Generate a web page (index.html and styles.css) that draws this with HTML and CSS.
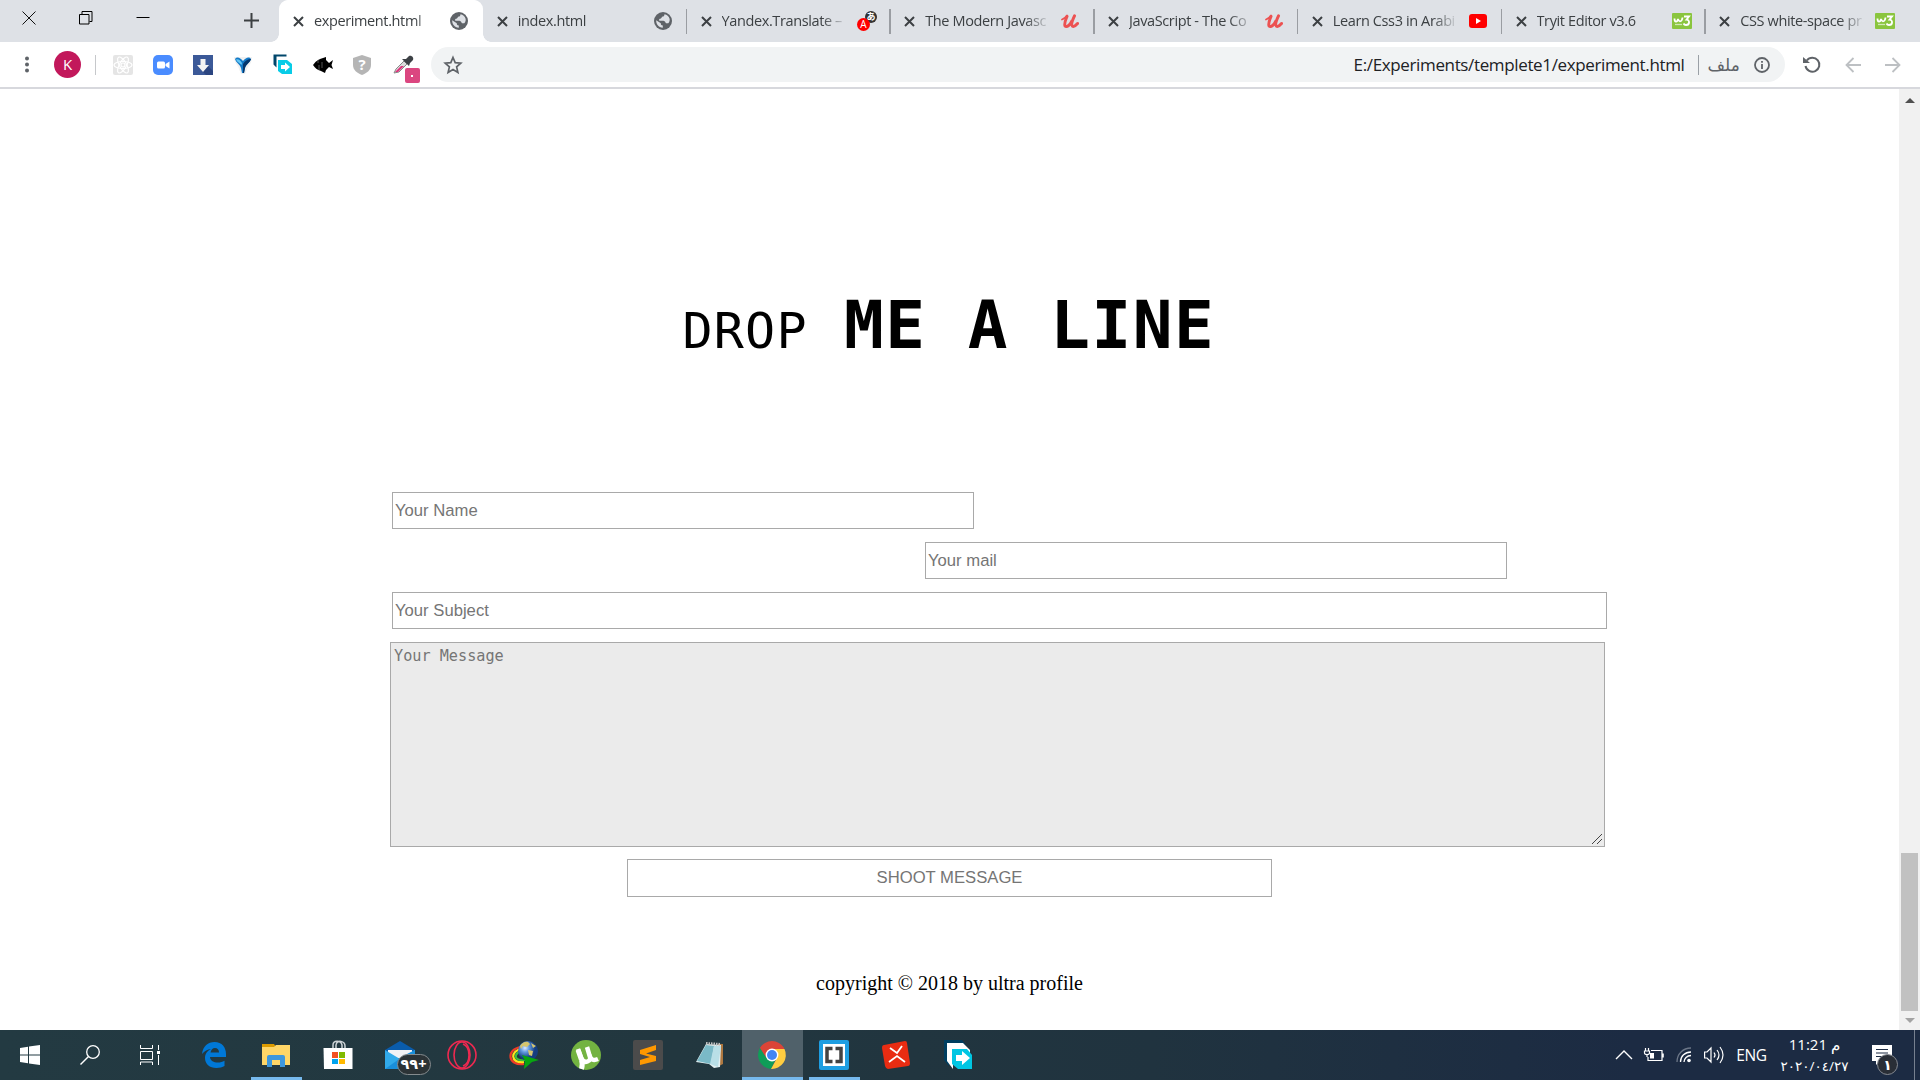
FILE: index.html
```html
<!DOCTYPE html>
<html lang="en">
<head>
<meta charset="utf-8">
<title>experiment.html</title>
<link rel="stylesheet" href="styles.css">
</head>
<body>
<svg class="defs" width="0" height="0">
  <defs>
    <symbol id="x" viewBox="0 0 11 11"><path d="M1 1l9 9M10 1l-9 9" stroke="#3c4043" stroke-width="2" fill="none"/></symbol>
    <symbol id="globe" viewBox="0 0 18 18"><circle cx="9" cy="9" r="9" fill="#5f6368"/><path d="M10.500 2.200c-.4 1.800-.6 2.400-2.500 2.600-.4 1.800-1.600 2-2.800 2.200v1.800h4.300c1.800.2 1.600 1.800 2.500 2.400h2.300c1.300-1.500 1.600-3 1.300-4.500C14.800 4.300 13 2.600 10.500 2.200zM2.200 8.200c-.2 3.800 2.300 7.200 6.600 7.500v-2.200c-1.500-.2-2-.8-2-2.300z" fill="#dee1e6"/></symbol>
    <symbol id="udemy" viewBox="0 0 18 15"><path d="M1 5.500Q4 4.500 6 1.500" fill="none" stroke="#ec5252" stroke-width="1.800" stroke-linecap="round"/><path d="M6 2.500C4.500 6 3 9.500 4 11.800 5.500 14 9 11 10.800 7M13.500 1.800C11.500 6 9.800 10.500 11.300 12c1.300 1 3.500-.5 5.200-2.500" fill="none" stroke="#ec5252" stroke-width="3" stroke-linecap="round" stroke-linejoin="round"/></symbol>
    <symbol id="w3" viewBox="0 0 20 16"><rect width="20" height="16" rx="1" fill="#8ac53e"/><path d="M2.500 5.500c0 4 2.700 4 3.500.5 1 3.500 4 3 4.500-1.500M12 3.500h5l-2.500 3.200c3.500 0 3.500 5.300-.5 5.300-1.300 0-2-.5-2.500-1.500" fill="none" stroke="#fff" stroke-width="1.800"/><path d="M3 11.500h7" stroke="#d2e9b4" stroke-width="1.300"/></symbol>
    <symbol id="freemake" viewBox="0 0 28 30"><path d="M0 0h18l4 5H5v21L0 20z" fill="#003e60"/><path d="M3 3h16l7 7v5H9v14L3 21z" fill="#fff"/><path d="M8 9h15l5 6v14H14l-6-5z" fill="#00c6e3"/><path d="M12 15h6v-4l8 7-8 7v-4h-6z" fill="#fff"/></symbol>
  </defs>
</svg>

<header class="browser">
  <div class="tabstrip">
    <div class="window-controls">
      <svg width="14" height="14"><path d="M.5.5l13 13M13.500.5l-13 13" stroke="#111" fill="none"/></svg>
      <svg width="14" height="14"><path d="M.5 3.500h9.500v9.500H.5zM3 3V.5h10v10h-2.500" stroke="#000" fill="none"/></svg>
      <svg width="14" height="14"><path d="M.5 6.500h13" stroke="#000"/></svg>
      <svg class="new-tab" width="15" height="15"><path d="M7.500 0v15M0 7.500h15" stroke="#3c4043" stroke-width="2"/></svg>
    </div>
    <div class="tab active"><svg class="close"><use href="#x"/></svg><span class="title">experiment.html</span><span class="fav"><svg width="18" height="18"><use href="#globe"/></svg></span></div>
    <div class="tab"><svg class="close"><use href="#x"/></svg><span class="title">index.html</span><span class="fav"><svg width="18" height="18"><use href="#globe"/></svg></span></div>
    <div class="tab"><svg class="close"><use href="#x"/></svg><span class="title">Yandex.Translate –</span><span class="fav"><svg class="yandex" width="20" height="20"><circle cx="14" cy="6" r="6" fill="#333"/><text x="14" y="9" font-size="9" font-weight="700" fill="#fff" text-anchor="middle">あ</text><circle cx="6.500" cy="13.500" r="6.500" fill="#f00"/><text x="6.500" y="17" font-size="10" fill="#fff" text-anchor="middle">A</text></svg></span></div>
    <div class="tab"><svg class="close"><use href="#x"/></svg><span class="title">The Modern Javasc</span><span class="fav"><svg width="18" height="15"><use href="#udemy"/></svg></span></div>
    <div class="tab"><svg class="close"><use href="#x"/></svg><span class="title">JavaScript - The Co</span><span class="fav"><svg width="18" height="15"><use href="#udemy"/></svg></span></div>
    <div class="tab"><svg class="close"><use href="#x"/></svg><span class="title">Learn Css3 in Arabi</span><span class="fav"><svg width="18" height="14"><rect width="18" height="14" rx="3" fill="#f00"/><path d="M7 4l5 3-5 3z" fill="#fff"/></svg></span></div>
    <div class="tab"><svg class="close"><use href="#x"/></svg><span class="title">Tryit Editor v3.6</span><span class="fav"><svg width="20" height="16"><use href="#w3"/></svg></span></div>
    <div class="tab last"><svg class="close"><use href="#x"/></svg><span class="title">CSS white-space pr</span><span class="fav"><svg width="20" height="16"><use href="#w3"/></svg></span></div>
  </div>

  <div class="toolbar">
    <div class="menu"><svg width="4" height="17"><g fill="#5f6368"><circle cx="2" cy="2.500" r="2"/><circle cx="2" cy="8.500" r="2"/><circle cx="2" cy="14.500" r="2"/></g></svg></div>
    <div class="avatar">K</div>
    <div class="divider"></div>
    <div class="extensions">
      <span><svg width="20" height="20"><rect width="20" height="20" rx="2" fill="#e5e5e5"/><g fill="none" stroke="#fff" stroke-width="1.200"><ellipse cx="10" cy="10" rx="9" ry="3.500"/><ellipse cx="10" cy="10" rx="9" ry="3.500" transform="rotate(60 10 10)"/><ellipse cx="10" cy="10" rx="9" ry="3.500" transform="rotate(120 10 10)"/><circle cx="10" cy="10" r="2"/></g></svg></span>
      <span><svg width="20" height="20"><rect width="20" height="20" rx="5" fill="#4a8cff"/><rect x="4" y="6.500" width="8" height="7" rx="1.500" fill="#fff"/><path d="M12.500 9l4-2.500v7l-4-2.500z" fill="#fff"/></svg></span>
      <span><svg width="20" height="20"><rect width="20" height="20" fill="#3b5998"/><path d="M14 10l6 6v4h-7l-4-4z" fill="#2b4580"/><path d="M7.500 4h5v6H16l-6 7-6-7h3.500z" fill="#f3f3f3"/></svg></span>
      <span><svg width="20" height="20"><path d="M1 2h18c0 7-4 9-5 12l-2 5H8l-2-5C5 10 1 8 1 2z" fill="#f1f1f1"/><path d="M2 4c2-2.500 5-1.500 8 2 3-3.500 6-4.500 8-2-1 4-5 5-6 9l-1 5H9l-1-5C7 9 3 8 2 4z" fill="#137ac8"/><path d="M3 4.500c2-.8 4.500.5 6 3.500l-.5 2C7 8 4 7 3 4.500z" fill="#62c5f3"/><path d="M18 4c-1 4-5 5-6 9l-1 5h-1V9c2-3 5-5.500 8-5z" fill="#05366c"/></svg></span>
      <span><svg width="20" height="21"><path d="M.5.5h13v2h-10v11l-3-3z" fill="#00466b"/><path d="M5 6h9l5 4v10H9l-4-3z" fill="#08cce7"/><path d="M8 11h4V8.500l5 4.500-5 4.500V15H8z" fill="#fff"/></svg></span>
      <span><svg width="20" height="16"><path d="M0 8C3 4 5 3 7 2l6-2v3l3 3 4-3-1.500 5L20 12l-4-2-3 3-1 3-4-2C4 13 2 11 0 8z" fill="#000"/><path d="M5 3v3M6 8v5M9 5v6" stroke="#777" stroke-width=".7"/></svg></span>
      <span class="shield"><svg width="18" height="20"><path d="M9 0l9 3v7c0 5-4 8-9 10-5-2-9-5-9-10V3z" fill="#b5b5b5"/><text x="9" y="15" font-size="15" font-weight="700" fill="#fff" text-anchor="middle">?</text></svg></span>
      <span><svg class="dropper" width="28" height="28"><path d="M1 18l2-4 8-8 3 3-8 8z" fill="#dcdcdc" stroke="#888"/><path d="M2 17l2-2 4-4h3l-6 6z" fill="#df357d"/><path d="M9 4l7 7 1-3 3-3c1-2-1-5-4-4l-3 3z" fill="#3d4145"/><rect x="12" y="13" width="15" height="15" rx="2" fill="#db4680"/><rect x="18" y="20" width="2" height="2" fill="#fff"/></svg></span>
    </div>
    <div class="omnibox">
      <svg width="18" height="18"><path d="M9 1.500l2.200 5.200 5.600.5-4.200 3.700 1.300 5.500L9 13.500l-4.900 2.900 1.300-5.500L1.200 7.200l5.600-.5z" fill="none" stroke="#5f6368" stroke-width="1.700"/></svg>
      <span class="url">E:/Experiments/templete1/experiment.html</span>
      <span class="scheme" lang="ar">ملف</span>
      <svg width="16" height="16"><circle cx="8" cy="8" r="7" fill="none" stroke="#5f6368" stroke-width="1.800"/><path d="M8 7v5M8 4v1.800" stroke="#5f6368" stroke-width="1.800"/></svg>
    </div>
    <div class="nav">
      <svg width="18" height="17"><path d="M3.800 4.500A7 7 0 1 1 2.500 10" fill="none" stroke="#5f6368" stroke-width="2"/><path d="M0 1l7 6H0z" fill="#5f6368"/></svg>
      <svg width="16" height="16"><path d="M16 8H1.500M8.500 1L1.500 8l7 7" fill="none" stroke="#bdc0c3" stroke-width="1.800"/></svg>
      <svg width="16" height="16"><path d="M0 8h14.500M7.500 1l7 7-7 7" fill="none" stroke="#bdc0c3" stroke-width="1.800"/></svg>
    </div>
  </div>
</header>

<div class="viewport">
  <main class="page">
    <h1 class="heading">DROP <strong>ME A LINE</strong></h1>
    <form class="contact">
      <input class="field name" type="text" placeholder="Your Name">
      <input class="field mail" type="text" placeholder="Your mail">
      <input class="field subject" type="text" placeholder="Your Subject">
      <div class="message-box">
        <textarea class="message" placeholder="Your Message"></textarea>
        <svg class="grip" width="10" height="10"><path d="M0 10L10 0M5 10l5-5" stroke="#444" stroke-width="1"/></svg>
      </div>
      <button class="send" type="button">SHOOT MESSAGE</button>
    </form>
    <footer class="copyright">copyright © 2018 by ultra profile</footer>
  </main>
  <div class="scrollbar">
    <svg width="10" height="5"><path d="M5 0l5 5H0z" fill="#505050"/></svg>
    <div class="thumb"></div>
    <svg width="10" height="5"><path d="M0 0h10L5 5z" fill="#a3a3a3"/></svg>
  </div>
</div>

<div class="taskbar">
  <div class="system">
    <span><svg width="20" height="20"><path d="M0 3l8-1.200V9.500H0zM9 1.600L20 0v9.500H9zM0 10.500h8v7.700L0 17zM9 10.500h11V20L9 18.400z" fill="#fff"/></svg></span>
    <span><svg width="20" height="20"><circle cx="13" cy="7" r="6.300" fill="none" stroke="#fff" stroke-width="1.300"/><path d="M8.500 11.500L.5 19.500" stroke="#fff" stroke-width="1.500"/></svg></span>
    <span><svg width="20" height="20"><path d="M.5 0v3.500h12V0M.5 6.500h12v8H.5zM.5 20v-3h12v3M18.500 0v5M18.500 10v10" fill="none" stroke="#fff"/><rect x="17" y="6" width="3" height="3" fill="#fff"/></svg></span>
  </div>
  <div class="apps">
    <span><svg width="24" height="26"><path d="M0 12C1 4 6 0 12.500 0 20 0 24 5.500 24 12v3H8c.3 4 4 5.500 7.500 5.500 3 0 5-.6 7-1.800V24c-2 1.300-5 2-8 2C7.500 26 3 22 3 16c0-4 2.500-7.500 6-9-3.500.3-6.500 2-9 5zm8.500-1.500H17C17 7.500 15.500 6 13 6c-2.500 0-4 2-4.500 4.500z" fill="#0078d7"/></svg></span>
    <span class="open"><svg width="28" height="24"><path d="M0 1h12l2 3H0z" fill="#dc9b00"/><path d="M0 4h12l2-2h14v20H0z" fill="#ffd667"/><path d="M5 24V14q0-2 2-2h14q2 0 2 2v10h-5v-7h-8v7z" fill="#3e97dc"/></svg></span>
    <span><svg width="30" height="30"><path d="M10 8V5c0-5 8-5 9 0v3M13 8V5c1-6 9-4 9 1v2" fill="none" stroke="#cdd3d6" stroke-width="1.500"/><path d="M.5 8h29v21H1z" fill="#fff"/><path d="M9 12h6v6H9z" fill="#f25022"/><path d="M16 12h6v6h-6z" fill="#7fba00"/><path d="M9 19h6v5H9z" fill="#00a4ef"/><path d="M16 19h6v5h-6z" fill="#ffb900"/></svg></span>
    <span class="mail-app"><svg width="30" height="28"><path d="M0 9L15 0l15 9v7H0z" fill="#0a5cab"/><path d="M3 9h24v8H3z" fill="#f1f2f5"/><path d="M0 9l15 9 15-9v19H0z" fill="#31aaea"/><path d="M0 28l20-14 10-5v19z" fill="#198fdb"/></svg><b class="count">٩٩+</b></span>
    <span><svg width="30" height="30"><g fill="none" stroke="#ee2950" stroke-width="1.600"><circle cx="15" cy="15" r="14"/><ellipse cx="15" cy="15" rx="8" ry="13"/><path d="M16 4c8 3 8 19 0 22"/></g></svg></span>
    <span><svg width="30" height="28"><defs><radialGradient id="earth" cx="35%" cy="35%"><stop offset="0" stop-color="#dfeaff"/><stop offset=".4" stop-color="#669de3"/><stop offset="1" stop-color="#153d80"/></radialGradient></defs><g fill="none" stroke-width="2.200"><path d="M12 6C-3 8-2 25 15 23" stroke="#f03b26"/><path d="M13 8C1 9 1 23 15 21" stroke="#ffe31c"/><path d="M14 10C4 11 4 21 16 19" stroke="#3bbf3f"/></g><circle cx="19" cy="10" r="10" fill="url(#earth)"/><path d="M11 5c2-3 5-5 8-4l2 2-3 3-4-1-2 3zM22 2l5 3-3 2zM19 9l5 1-1 5-3-1z" fill="#d6c56e"/><path d="M13 14l17 5-7 2-8 7 1-8z" fill="#08a511"/></svg></span>
    <span><svg width="30" height="30"><circle cx="15" cy="15" r="15" fill="#73b341"/><path d="M7 10l3.500 10M10.500 20q1.500 4 0 9" fill="none" stroke="#fff" stroke-width="5"/><path d="M7 9l3.500 9.500q2 4.500 6 3t2-6L16 7M18.500 15q1.500 7 8.500 4" fill="none" stroke="#fff" stroke-width="4.500"/></svg></span>
    <span><svg width="30" height="30"><rect width="30" height="30" rx="2" fill="#4b4b4b"/><path d="M7 10l16-5v5l-10 3.500 10 2.500v5L7 25v-5l10-3-10-3z" fill="#ff9800"/></svg></span>
    <span><svg width="28" height="28"><path d="M22 3l5 0v20l-4 2z" fill="#ae7840"/><path d="M10 3l15 1-1 22-6 1-5-4-13-2z" fill="#e3eff1"/><path d="M10 4L1 20l14 3 3-18z" fill="#7ab9c7"/><path d="M18 5l-4 18 8 3 3-21z" fill="#b9dfe7"/><path d="M10 2.500l15 1" stroke="#c4c4c4" stroke-width="3" stroke-dasharray="1.500 1"/></svg></span>
    <span class="current"><svg width="28" height="28" viewBox="0 0 28 28"><path d="M1.900 7A14 14 0 0 1 26.100 7L26 8H14L8 17z" fill="#db4437"/><path d="M1.900 7A14 14 0 0 0 13 28l5-11H8.500z" fill="#0f9d58"/><path d="M26.500 8A14 14 0 0 1 13 28l6-11 1-4-6-5z" fill="#ffcd40"/><circle cx="14" cy="14" r="6.400" fill="#fff"/><circle cx="14" cy="14" r="5" fill="#4285f4"/></svg></span>
    <span class="open"><svg width="30" height="30"><rect width="30" height="30" rx="2" fill="#1e9ee2"/><rect x="4" y="4" width="22" height="22" fill="#fff"/><path d="M13.500 8.500H8v13h5.500M16.500 8.500H22v13h-5.500" fill="none" stroke="#434343" stroke-width="3.500"/></svg></span>
    <span><svg width="28" height="28"><path d="M2 4l21-4q2 0 2 2l3 20q0 3-2 3L6 28q-2 0-3-3L0 7q0-3 2-3z" fill="#e92c12"/><path d="M8 7l7 5 5-7M7 21l8-6 8 6" fill="none" stroke="#fff" stroke-width="1.800"/></svg></span>
    <span><svg width="28" height="30"><use href="#freemake"/></svg></span>
  </div>
  <div class="tray">
    <span><svg width="16" height="10"><path d="M0 9l8-8 8 8" fill="none" stroke="#fff" stroke-width="1.400"/></svg></span>
    <span><svg width="20" height="14"><path d="M7 2.500h11v10H4V9M19.200 5.500v4M1.500 0v3M4.500 0v3M.5 3h5v2c0 2-5 2-5 0zM3 6v3" fill="none" stroke="#fff" stroke-width="1.200"/><rect x="6" y="5" width="4" height="5.500" fill="#fff"/></svg></span>
    <span><svg width="16" height="16"><g fill="none" stroke-width="1.300"><path d="M1 15C1 7 7 1 15 1" stroke="#6b7687"/><path d="M4.500 15c0-6 4.500-10 10.500-10M8 15c0-3.500 3-6.500 7-6.500" stroke="#fff"/></g><circle cx="13" cy="13.500" r="1.800" fill="#fff"/></svg></span>
    <span><svg width="20" height="18"><path d="M.6 6H3l4-4v14l-4-4H.6zM10 6.500q2 2.500 0 5M13 4q4 5 0 10M16 1q6 8 0 16" fill="none" stroke="#fff" stroke-width="1.200"/></svg></span>
    <span class="language">ENG</span>
    <span class="clock"><time>11:21 م</time><time class="date">٢٠٢٠/٠٤/٢٧</time></span>
    <span class="notifications"><svg width="20" height="20"><path d="M0 0h20v16H8l-4 4v-4H0z" fill="#fff"/><path d="M4 4.500h12M4 8h12M4 11.500h8" stroke="#1c2b43" stroke-width="1.200"/></svg><b class="badge">١</b></span>
    <span class="show-desktop"></span>
  </div>
</div>
</body>
</html>
```
FILE: styles.css
```css
* { box-sizing: border-box; }
body { margin: 0; width: 1920px; height: 1080px; overflow: hidden; display: flex; flex-direction: column; background: #fff; font-family: "Open Sans", "DejaVu Sans", "Noto Sans CJK JP", sans-serif; }
svg { display: block; flex: none; overflow: visible; }
.defs { position: absolute; }

/* Browser chrome */
.browser { height: 89px; border-bottom: 2px solid #d7d8dd; flex: none; }
.tabstrip { height: 42px; background: #dee1e6; display: flex; }
.window-controls { width: 279.500px; padding: 11px 0 0 21.500px; display: flex; align-items: flex-start; gap: 43px; }
.window-controls .new-tab { margin: 2px 0 0 51px; }
.tab { width: 203.750px; height: 42px; flex: none; display: flex; align-items: center; padding-left: 13.500px; position: relative; color: #3c4043; }
.tab:not(.active):not(.last)::after { content: ""; position: absolute; right: 0; top: 9px; width: 1.500px; height: 25px; background: #9a9da2; }
.tab.active { background: #fff; border-radius: 9px 9px 0 0; box-shadow: -1px 0 #fff; }
.tab.active::before, .tab.active::after { content: ""; position: absolute; bottom: 0; width: 8px; height: 8px; }
.tab.active::before { left: -9px; background: radial-gradient(circle at 0 0, transparent 7.500px, #fff 8px); }
.tab.active::after { right: -8px; background: radial-gradient(circle at 100% 0, transparent 7.500px, #fff 8px); }
.close { width: 11px; height: 11px; }
.title { width: 124px; margin-left: 10px; flex: none; white-space: nowrap; font-size: 14.500px; letter-spacing: -.38px; line-height: 24px; -webkit-mask-image: linear-gradient(90deg, #000 100px, transparent 126px); mask-image: linear-gradient(90deg, #000 100px, transparent 126px); }
.fav { width: 42px; display: flex; justify-content: center; }

.toolbar { height: 45px; display: flex; align-items: center; }
.menu { width: 54px; display: flex; justify-content: center; }
.avatar { width: 27px; height: 27px; border-radius: 50%; background: #c2185b; color: #fff; font-size: 15px; line-height: 27px; text-align: center; }
.divider { width: 1px; height: 20px; background: #c6c8cb; margin: 0 7px 0 14px; }
.extensions { display: flex; }
.extensions span { width: 40px; height: 28px; display: flex; align-items: center; justify-content: center; }
.extensions .shield { padding-right: 2px; }
.dropper { margin: 9px 0 0 7px; }
.omnibox { width: 1354px; height: 35px; margin-left: 7.500px; padding: 0 15px 0 13px; border-radius: 18px; background: #f1f3f4; display: flex; align-items: center; }
.url { margin-left: auto; font-size: 17px; letter-spacing: -.36px; color: #202124; white-space: nowrap; }
.scheme { margin: 0 12px 0 13px; padding-left: 9px; width: 44px; border-left: 1px solid #9aa0a6; color: #5f6368; font-size: 17px; line-height: 20px; }
.nav { display: flex; align-items: center; gap: 24px; margin-left: 18px; }

/* Web page */
.viewport { height: 941px; display: flex; flex: none; }
.page { width: 1899px; padding-top: 192px; display: flex; flex-direction: column; }
.heading { margin: 0 0 121px 682.500px; font: 50px/90px "DejaVu Sans Mono", monospace; letter-spacing: 1.200px; word-spacing: 5px; height: 90px; white-space: nowrap; color: #000; }
.heading strong { font-size: 66px; letter-spacing: 1.500px; word-spacing: 0; }
.contact { width: 1217px; margin-left: 390px; display: flex; flex-direction: column; gap: 13px; }
.field, .message, .send { border: 1px solid #a9a9a9; border-radius: 0; outline: 0; color: #757575; font: 16.670px "Liberation Sans", Arial, sans-serif; }
.field { height: 37px; padding: 1px 2px; margin: 0 0 0 2px; background: #fff; }
.name, .mail { width: 582px; }
.mail { margin-left: 535px; }
.message-box { position: relative; width: 1215px; height: 205px; margin-bottom: -1px; }
.message { display: block; width: 100%; height: 100%; margin: 0; padding: 4px 3px; background: #ebebeb; font: 15.200px "DejaVu Sans Mono", monospace; resize: none; }
.grip { position: absolute; right: 3px; bottom: 3px; }
.send { width: 645px; height: 38px; margin-left: 237px; padding: 0 0 1px; background: #fff; }
::placeholder { color: #757575; opacity: 1; }
.copyright { margin-top: 75px; text-align: center; font: 20px/23px "Liberation Serif", "Times New Roman", serif; color: #000; }
.scrollbar { width: 21px; background: #f1f1f1; display: flex; flex-direction: column; align-items: center; padding: 9px 0 7px; }
.thumb { width: 17px; height: 158px; margin: auto 0 7px; background: #c1c1c1; }

/* Desktop taskbar */
.taskbar { height: 50px; flex: none; display: flex; background: linear-gradient(90deg, #233a42, #22373f 35%, #20333f 60%, #1c2b43 85%); color: #fff; }
.system, .apps { display: flex; }
.system span { width: 60px; display: flex; justify-content: center; align-items: center; }
.apps { margin-left: 2.500px; }
.apps span { width: 62px; display: flex; align-items: center; justify-content: center; position: relative; }
.apps .current { background: #50616a; width: 61px; margin-left: 1px; }
.apps .open::after, .apps .current::after { content: ""; position: absolute; left: 6px; right: 5px; bottom: 0; height: 3px; background: #76b9ed; }
.apps .current::after { left: 0; right: 0; }
.count { position: absolute; left: 28px; bottom: 5px; width: 34px; height: 21px; border: 1px solid #858b8e; border-radius: 11px; background: #2b3336; font-size: 14.500px; line-height: 18px; letter-spacing: -.5px; text-align: center; }
.tray { margin-left: auto; display: flex; }
.tray > span { width: 30px; display: flex; align-items: center; justify-content: center; }
.tray .language { width: 45px; font-size: 15.500px; letter-spacing: -.4px; }
.tray .clock { width: 81px; flex-direction: column; font-size: 15px; line-height: 22px; letter-spacing: -.5px; }
.date { direction: ltr; unicode-bidi: bidi-override; font-size: 13.500px; letter-spacing: -.8px; white-space: nowrap; }
.tray .notifications { width: 59px; padding-right: 6px; position: relative; }
.badge { position: absolute; left: 22px; top: 24px; width: 21px; height: 21px; border: 1px solid #868a91; border-radius: 50%; background: #292e36; font-size: 14px; line-height: 19px; text-align: center; }
.tray .show-desktop { width: 6px; border-left: 1px solid #76808f; }
```
